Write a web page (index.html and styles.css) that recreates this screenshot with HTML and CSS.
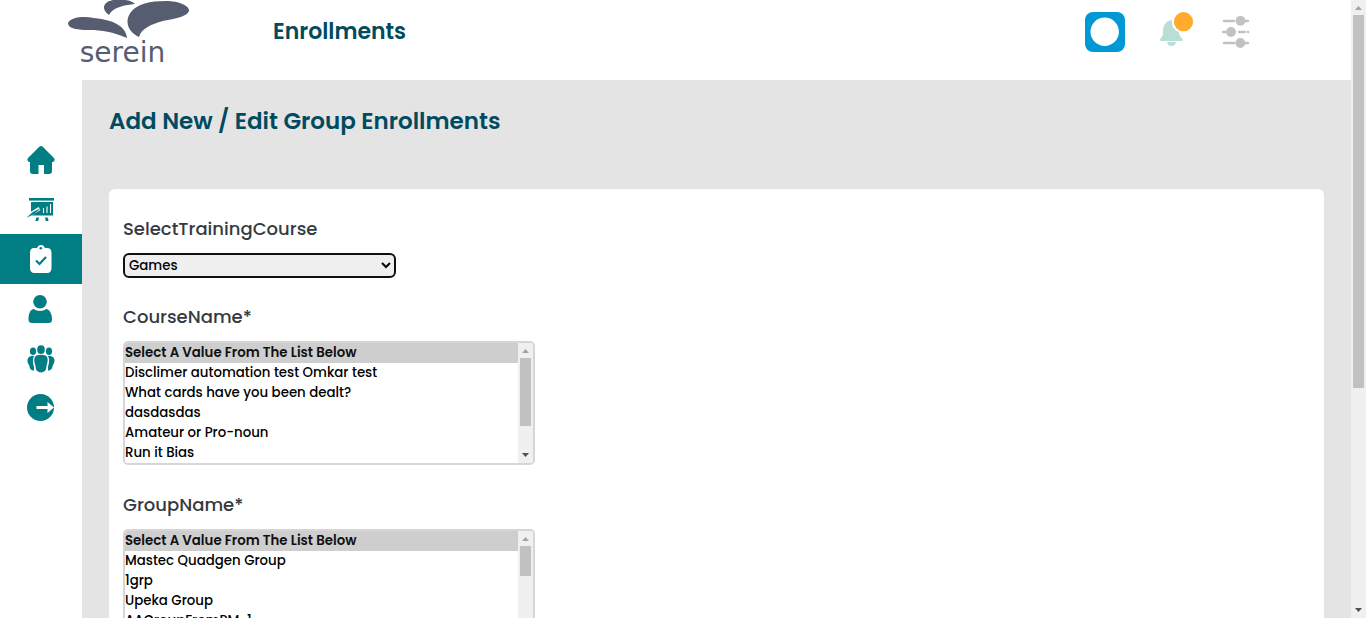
FILE: index.html
```html
<!DOCTYPE html>
<html lang="en">
<head>
<meta charset="utf-8">
<meta name="viewport" content="width=device-width, initial-scale=1">
<title>Enrollments</title>
<link rel="stylesheet" href="styles.css">
</head>
<body>
<div class="app">
<div class="page">
  <header class="header">
    <a class="logo" href="#" aria-label="serein">
      <svg class="logo-mark" viewBox="68 0 122 39" aria-hidden="true">
        <path d="M109 15C101 9 103 2 113 0H125C130 0 134 3 135 4C125 5 113 7 109 15Z"/>
        <path d="M68 23C71 17 83 16 94 18C115 20 126 27 127 38C113 32 102 30 89 30C78 30 68 29 68 23Z"/>
        <path d="M139 37C128 32 124 21 131 12C137 4 150 1 166 1C179 1 190 6 189 11C187 17 173 19 163 21C151 24 141 29 139 37Z"/>
      </svg>
      <span class="logo-name">serein</span>
    </a>
    <h1 class="header-title">Enrollments</h1>
    <div class="tools">
      <button class="tool" type="button" aria-label="Profile">
        <svg width="40" height="40" viewBox="0 0 40 40"><rect width="40" height="40" rx="8" fill="#0099d6"/><circle cx="19.7" cy="19.7" r="14.2" fill="#fff"/></svg>
      </button>
      <button class="tool" type="button" aria-label="Notifications">
        <svg width="40" height="40" viewBox="0 0 40 40"><path d="M12 8C6 9 3 13 3 19V21C3 25 0 26 0 28.200Q0 29 1 29H22Q23 29 22.800 28C22.500 26 19 25 19 20C15 19 11 14 12 8Z" fill="#b9ddd7"/><path d="M7 30H16C15.500 32.500 14 34 11.500 34S7.500 32.500 7 30Z" fill="#b9ddd7"/><circle cx="23.500" cy="9.700" r="9.600" fill="#ffab2d"/></svg>
      </button>
      <button class="tool" type="button" aria-label="Settings">
        <svg width="28" height="40" viewBox="0 0 28 40" fill="#c2c2c2" stroke="#c2c2c2" stroke-width="2.400" stroke-linecap="round"><path d="M2 9H12M22 9H26M1 20H5M17 20H23M26 20H26.200M2 31H12M22 31H26" fill="none"/><g stroke="none"><circle cx="18.500" cy="8.800" r="4.900"/><circle cx="9" cy="20" r="4.900"/><circle cx="18.300" cy="31" r="4.900"/></g></svg>
      </button>
    </div>
  </header>

  <div class="body">
    <nav class="sidebar" aria-label="Main">
      <a class="nav-item" href="#" aria-label="Home">
        <svg class="nav-icon" viewBox="0 0 28 28"><path d="M12 1.900Q14 .3 16 1.900L27 13Q28.600 15.500 26 17H25V26Q25 29 22 29H17V20H11.500V29H6Q3 29 3 26V17H2Q-.6 15.500 1 13Z"/></svg>
      </a>
      <a class="nav-item" href="#" aria-label="Trainings">
        <svg class="nav-icon" viewBox="0 0 28 28"><rect x="2" y="3" width="25" height="2.600"/><path d="M4 7H26V20.500H4Z"/><path d="M0 21.500L12.500 13.500" stroke="#fff" stroke-width="3.600"/><path d="M.5 22L5.500 17.500L12.500 14L8 18.500Z" stroke="#007e84" stroke-width=".5"/><path d="M16.500 18V13M20 18V11.500M23.500 18V9" stroke="#fff" stroke-width="1.100"/><path d="M9.300 22.500H12L11.300 26H8.400ZM18 22.500H20.700L21.600 26H18.700Z"/></svg>
      </a>
      <a class="nav-item nav-item-active" href="#" aria-label="Enrollments" aria-current="page">
        <svg class="nav-icon" viewBox="0 0 28 28"><path d="M7 3H10C11 1 12 0 14 0S17 1 18 3H20Q24.500 3 24.500 8V23Q24.500 28 20 28H7.500Q3 28 3 23V8Q3 3 7 3Z"/><circle cx="13.800" cy="3.300" r="1.300" fill="#007e84"/><path d="M9 15.500L12.500 19L19 12" fill="none" stroke="#007e84" stroke-width="2.200"/></svg>
      </a>
      <a class="nav-item" href="#" aria-label="Users">
        <svg class="nav-icon" viewBox="0 0 28 28"><circle cx="13" cy="6.700" r="6.800"/><path d="M6.500 14C10.500 16.500 15.500 16.500 19.500 14C23.500 15 25 20 25 24.500Q25 28 21.500 28H5Q1.500 28 1.500 24.500C1.500 20 2.500 15 6.500 14Z"/></svg>
      </a>
      <a class="nav-item" href="#" aria-label="Groups">
        <svg class="nav-icon" viewBox="0 0 28 28"><ellipse cx="14" cy="4.700" rx="3.800" ry="4.400"/><ellipse cx="6" cy="6.200" rx="3.100" ry="3.800"/><ellipse cx="22" cy="6.200" rx="3.100" ry="3.800"/><path d="M9.500 10.600C12 9.500 16 9.500 18.500 10.600C21.500 12 21 17 19.500 21C19.500 25.500 17 27.400 14 27.400S8.500 25.500 8.500 21C7 17 6.500 12 9.500 10.600ZM3 11.500Q5 10.500 7.200 11C5 14 6 19 7 21.500V25.500C3.500 25.500 2.500 23 2.500 21C.5 18 -1 13.500 3 11.500ZM25 11.500Q23 10.500 20.800 11C23 14 22 19 21 21.500V25.500C24.500 25.500 25.500 23 25.500 21C27.500 18 29 13.500 25 11.500Z"/></svg>
      </a>
      <a class="nav-item" href="#" aria-label="Log out">
        <svg class="nav-icon" viewBox="0 0 28 28"><circle cx="13.500" cy="12.500" r="13.500"/><path d="M9.500 11H20.500V7L27 12.500L20.500 18V14H9.500Z" fill="#fff"/></svg>
      </a>
    </nav>

    <main class="main">
      <h2 class="main-title">Add New / Edit Group Enrollments</h2>
      <form class="card">
        <label class="label" for="training">SelectTrainingCourse</label>
        <select class="dropdown" id="training"><option>Games</option><option>Courses</option></select>

        <label class="label" for="course">CourseName*</label>
        <div class="list-frame">
          <select class="listbox" id="course" size="6">
            <option selected>Select A Value From The List Below</option>
            <option>Disclimer automation test Omkar test</option>
            <option>What cards have you been dealt?</option>
            <option>dasdasdas</option>
            <option>Amateur or Pro-noun</option>
            <option>Run it Bias</option>
          </select>
          <div class="scrollbar" aria-hidden="true">
            <svg class="scroll-arrow" viewBox="0 0 15 15"><path d="M4 10L7.500 6L11 10Z"/></svg>
            <div class="scroll-track"><div class="scroll-thumb" style="height: 76%"></div></div>
            <svg class="scroll-arrow scroll-arrow-down" viewBox="0 0 15 15"><path d="M4 5L7.500 9L11 5Z"/></svg>
          </div>
        </div>

        <label class="label" for="group">GroupName*</label>
        <div class="list-frame">
          <select class="listbox" id="group" size="6">
            <option selected>Select A Value From The List Below</option>
            <option>Mastec Quadgen Group</option>
            <option>1grp</option>
            <option>Upeka Group</option>
            <option>AAGroupFromPM-1</option>
          </select>
          <div class="scrollbar" aria-hidden="true">
            <svg class="scroll-arrow" viewBox="0 0 15 15"><path d="M4 10L7.500 6L11 10Z"/></svg>
            <div class="scroll-track"><div class="scroll-thumb" style="height: 33%"></div></div>
            <svg class="scroll-arrow scroll-arrow-down" viewBox="0 0 15 15"><path d="M4 5L7.500 9L11 5Z"/></svg>
          </div>
        </div>
      </form>
    </main>
  </div>
</div>
<div class="scrollbar" aria-hidden="true">
  <svg class="scroll-arrow" viewBox="0 0 15 15"><path d="M4 10L7.500 6L11 10Z"/></svg>
  <div class="scroll-track"><div class="scroll-thumb" style="height: 63.500%"></div></div>
  <svg class="scroll-arrow scroll-arrow-down" viewBox="0 0 15 15"><path d="M4 5L7.500 9L11 5Z"/></svg>
</div>
</div>
</body>
</html>
```

FILE: styles.css
```css
* { box-sizing: border-box; }

body {
  margin: 0;
  color: #343a40;
  background: #fff;
  font-family: Poppins, Inter, sans-serif;
}

.app {
  display: flex;
  height: 100vh;
}

.page {
  flex: 1;
  min-width: 0;
  overflow-x: hidden;
  overflow-y: auto;
  scrollbar-width: none;
}

.header {
  display: flex;
  align-items: flex-start;
  height: 80px;
  padding-right: 101px;
}

.logo {
  display: flex;
  flex-direction: column;
  align-items: center;
  width: 165px;
  margin-left: 40px;
  color: #575d70;
  text-decoration: none;
}

.logo-mark {
  width: 122px;
  height: 39px;
  margin-left: 12px;
  fill: #575d70;
}

.logo-name {
  font: 28px/28px "DejaVu Sans", sans-serif;
}

.header-title {
  margin: 0 0 0 68px;
  color: #004b60;
  font-size: 22px;
  font-weight: 600;
  line-height: 64px;
}

.tools {
  display: flex;
  gap: 35px;
  margin: 12px 0 0 auto;
}

.tool {
  display: flex;
  padding: 0;
  border: 0;
  background: none;
}

.tool:nth-child(3) { margin-left: -13px; }
.tool svg { overflow: visible; }

.body { display: flex; }

.sidebar {
  flex: 0 0 82px;
  padding-top: 54px;
}

.nav-item {
  display: flex;
  align-items: center;
  justify-content: center;
  height: 50px;
  padding-right: 1px;
  color: #007e84;
}

.nav-item-active {
  color: #fff;
  background: #007e84;
}

.nav-icon {
  width: 28px;
  height: 28px;
  overflow: visible;
  fill: currentColor;
}

.main {
  flex: 1;
  min-height: 894px;
  padding: 24px 27px;
  background: #e4e4e4;
}

.main-title {
  margin: 0 0 51px;
  color: #004b60;
  font-size: 23px;
  font-weight: 600;
  line-height: 34px;
}

.card {
  display: flex;
  flex-direction: column;
  align-items: flex-start;
  min-height: 600px;
  padding: 26px 14px;
  border-radius: 6px;
  background: #fff;
}

.label {
  margin-bottom: 11px;
  font-size: 18px;
  font-weight: 500;
  line-height: 27px;
}

.dropdown {
  width: 273px;
  height: 25px;
  margin-bottom: 25px;
  border: 2px solid #101010;
  border-radius: 6px;
  color: #000;
  background-color: #efefef;
  font-family: inherit;
  font-weight: 500;
}

.list-frame {
  display: flex;
  width: 412px;
  max-width: 100%;
  margin-bottom: 26px;
  overflow: hidden;
  border: 2px solid #d6d6d6;
  border-radius: 5px;
}

.listbox {
  flex: 1;
  min-width: 0;
  height: 120px;
  padding: 0;
  border: 0;
  border-radius: 0;
  color: #000;
  background: #fff;
  font-family: inherit;
  scrollbar-width: none;
}

.listbox option {
  height: 20px;
  min-height: 20px;
  padding: 0;
  font-weight: 500;
  line-height: 20px;
}

.listbox option:first-child { font-weight: 600; }

.scrollbar {
  display: flex;
  flex: 0 0 15px;
  flex-direction: column;
  background: #f0f0f0;
}

.scroll-arrow {
  flex: none;
  width: 15px;
  height: 15px;
  fill: #a3a3a3;
}

.scroll-arrow-down { fill: #505050; }

.scroll-track {
  flex: 1;
  padding: 0 2px;
}

.scroll-thumb { background: #c1c1c1; }
```
